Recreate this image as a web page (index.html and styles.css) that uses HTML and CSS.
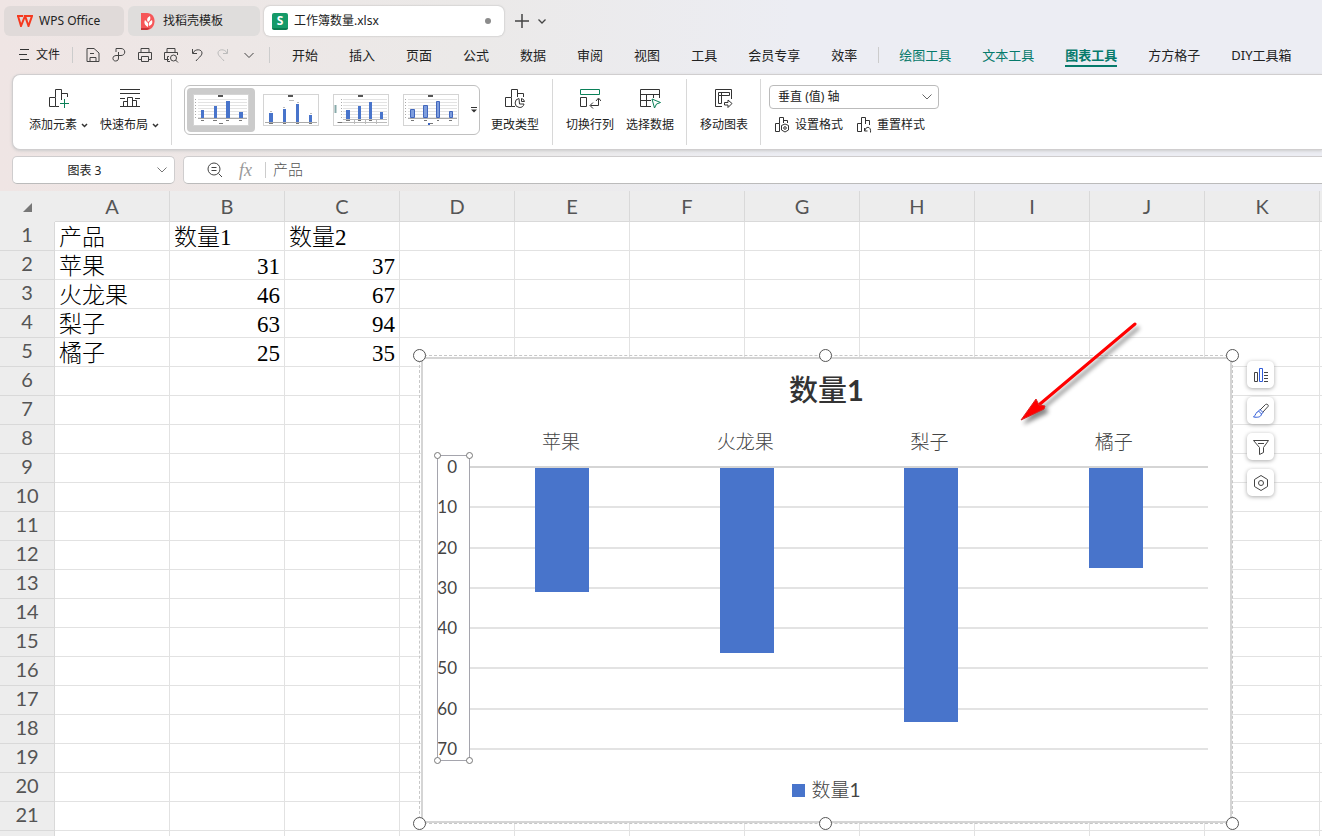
FILE: index.html
```html
<!DOCTYPE html>
<html lang="zh-CN">
<head>
    <meta charset="UTF-8">
    <meta name="viewport" content="width=device-width, initial-scale=1.0">
    <title>工作簿数量.xlsx</title>
    <link rel="stylesheet" href="styles.css">
</head>
<body>
    <!-- 文档标签 -->
    <div class="doc-tabs">
        <button class="doc-tab tab-home">
            <svg width="16" height="12" viewBox="0 0 16 12" fill="none" stroke="#f5391f" stroke-width="2"><path d="M0 1H6M1 1L4 11L8 1L11.500 11L15 1H8L10 6"/></svg>
            WPS Office
        </button>
        <button class="doc-tab tab-docer">
            <svg width="14" height="17" viewBox="0 0 14 17"><path d="M0 0H6C16 0 16 16 6 17H0Z" fill="#f65658"/><path d="M0 15H9L6 17H0Z" fill="#c93236"/><path d="M7 14C3 12 3 9 4 7L7 10ZM7 9C5 6 7 4 9 3C10 6 9 8 7 9ZM8 13C7 10 9 8 11 7C12 10 11 12 8 13Z" fill="#fff"/></svg>
            找稻壳模板
        </button>
        <button class="doc-tab tab-file">
            <span class="sheet-logo">S</span>
            工作簿数量.xlsx
            <span class="dot"></span>
        </button>
        <button class="plain new-tab" aria-label="新建">
            <svg width="14" height="14" viewBox="0 0 14 14"><path d="M7 0V14M0 7H14" stroke="#444" stroke-width="1.500"/></svg>
        </button>
        <button class="plain" aria-label="标签列表">
            <svg width="8" height="5" viewBox="0 0 8 5" fill="none" stroke="#444" stroke-width="1.300"><path d="M.5 .5L4 4L7.500 .5"/></svg>
        </button>
    </div>

    <!-- 菜单栏 -->
    <div class="menu-bar">
        <button class="plain file-menu">
            <svg width="10" height="12" viewBox="0 0 10 12" stroke="#333"><path d="M1 .5H10M0 5.500H8M1 10.500H10"/></svg>
            文件
        </button>
        <div class="quick-tools">
            <button class="plain" aria-label="保存"><svg class="icon"><path d="M2 1.500H9L14 6V14.500H2ZM5 14V10.500H11V14M5 6.500H9"/></svg></button>
            <button class="plain" aria-label="输出为PDF"><svg class="icon"><path d="M5 5V1.500H10C15 1.500 15 8.500 10 8.500H5C1 8.500 1 14 4.500 14C7 14 7.500 12.500 7.500 11V5"/></svg></button>
            <button class="plain" aria-label="打印"><svg class="icon"><path d="M4 5V1.500H12V5M4 12.500H1.500V5.500H14.500V12.500H12M4.500 9.500H11.500V14.500H4.500Z"/></svg></button>
            <button class="plain" aria-label="打印预览"><svg class="icon"><path d="M4 5V1.500H12V5M6 12.500H1.500V5.500H14.500V8M6 9.500H4.500V14.500H7"/><circle cx="10.500" cy="11" r="3"/><path d="M12.500 13L15 15.500"/></svg></button>
            <button class="plain" aria-label="撤销"><svg class="icon"><path d="M3.500 2V6.500H8M4 6C6 1.500 13 2 13 6C13 9 9 11 7 14"/></svg></button>
            <button class="plain" aria-label="恢复"><svg class="icon faded"><path d="M12.500 2V6.500H8M12 6C10 1.500 3 2 3 6C3 9 7 11 9 14"/></svg></button>
            <button class="plain" aria-label="更多"><svg class="icon"><path d="M3.500 6L8 10.500L12.500 6"/></svg></button>
        </div>
        <nav class="menu">
            <a href="#">开始</a>
            <a href="#">插入</a>
            <a href="#">页面</a>
            <a href="#">公式</a>
            <a href="#">数据</a>
            <a href="#">审阅</a>
            <a href="#">视图</a>
            <a href="#">工具</a>
            <a href="#">会员专享</a>
            <a href="#">效率</a>
        </nav>
        <nav class="menu menu-tools">
            <a href="#" class="green">绘图工具</a>
            <a href="#" class="green">文本工具</a>
            <a href="#" class="green active">图表工具</a>
            <a href="#">方方格子</a>
            <a href="#">DIY工具箱</a>
        </nav>
    </div>

    <!-- 功能区 -->
    <div class="ribbon">
        <div class="group group-add">
            <button class="big-btn">
                <svg width="22" height="22" viewBox="0 0 22 22"><path d="M1.500 18.500V9.500H7.500V18.500ZM7.500 9V1.500H13.500V12M7.500 18.500H11M13.500 5.500H19.500V9"/><path class="g" d="M16.500 11V20M12 15.500H21"/></svg>
                <span>添加元素<svg class="caret" viewBox="0 0 7 5"><path d="M1 1L3.500 3.500L6 1"/></svg></span>
            </button>
            <button class="big-btn">
                <svg width="22" height="22" viewBox="0 0 22 22"><path d="M1 1.500H21M1 5.500H21M1 10.500H6M16 10.500H21M1 18.500H21M4.500 18V13.500H8.500M8.500 18V9.500H13.500V18M13.500 12.500H17.500V18"/></svg>
                <span>快速布局<svg class="caret" viewBox="0 0 7 5"><path d="M1 1L3.500 3.500L6 1"/></svg></span>
            </button>
        </div>
        <div class="group group-style">
            <div class="gallery">
                <button class="thumb selected" aria-label="样式 1">
                    <svg width="56" height="32" viewBox="0 0 56 32"><rect x=".5" y=".5" width="55" height="31" fill="#fff" stroke="#d4d4d4"/><path d="M5 5.500H54M5 8.500H54M5 11.500H54M5 14.500H54M5 17.500H54M5 20.500H54M5 23.500H54" stroke="#e3e3e3"/><path d="M5 24.500H54" stroke="#aaa"/><path d="M25 2H30" stroke="#555" stroke-width="2"/><path d="M2.500 5V25" stroke="#aaa" stroke-dasharray="1 2"/><path d="M8 16h3v8H8zM21 12h3v12h-3zM33 7h4v17h-4zM46 18h4v6h-4z" fill="#4874cb"/><path d="M8 26.500H11M20 26.500H24M33 26.500H36M46 26.500H49M26 29.500H30" stroke="#777"/></svg>
                </button>
                <button class="thumb" aria-label="样式 2">
                    <svg width="56" height="32" viewBox="0 0 56 32"><rect x=".5" y=".5" width="55" height="31" fill="#fff" stroke="#d4d4d4"/><path d="M25 2H30" stroke="#555" stroke-width="2"/><path d="M26 6.500H31M7 17.500H9M20 13.500H22M34 8.500H36M47 19.500H49" stroke="#bbb"/><path d="M2 28.500H54" stroke="#aaa"/><path d="M6 19h4v9H6zM20 15h3v13h-3zM33 10h3v18h-3zM46 21h3v7h-3z" fill="#4874cb"/><path d="M6 29.500H10M20 29.500H23M33 29.500H36M46 29.500H49" stroke="#777"/></svg>
                </button>
                <button class="thumb" aria-label="样式 3">
                    <svg width="56" height="32" viewBox="0 0 56 32"><rect x=".5" y=".5" width="55" height="31" fill="#fff" stroke="#d4d4d4"/><path d="M10 5.500H54M10 8.500H54M10 11.500H54M10 14.500H54M10 17.500H54M10 20.500H54M10 23.500H54" stroke="#e3e3e3"/><path d="M25 2H30" stroke="#555" stroke-width="2"/><path d="M2.500 11V19" stroke="#8aa" stroke-width="2"/><path d="M8.500 5V25" stroke="#aaa" stroke-dasharray="1 2"/><path d="M13 16h4v9h-4zM25 12h3v13h-3zM36 8h3v17h-3zM47 18h3v7h-3z" fill="#4874cb"/><path d="M10 25.500H54M4 28.500H54M21.500 25V30M32.500 25V30M43.500 25V30" stroke="#bbb"/><path d="M5 28.500H9M13 26.500H17M25 26.500H28M36 26.500H39" stroke="#777"/></svg>
                </button>
                <button class="thumb" aria-label="样式 4">
                    <svg width="56" height="32" viewBox="0 0 56 32"><rect x=".5" y=".5" width="55" height="31" fill="#fff" stroke="#d4d4d4"/><path d="M5 5.500H54M5 8.500H54M5 11.500H54M5 14.500H54M5 17.500H54M5 20.500H54M5 23.500H54" stroke="#e3e3e3"/><path d="M5 24.500H54" stroke="#aaa"/><path d="M25 2H30" stroke="#555" stroke-width="2"/><path d="M2.500 5V25" stroke="#aaa" stroke-dasharray="1 2"/><path d="M7.500 15.500h4v8h-4zM20.500 11.500h4v12h-4zM33.500 7.500h3v16h-3zM46.500 17.500h3v6h-3z" fill="#7d9ddd" stroke="#4166bd"/><path d="M8 26.500H11M21 26.500H24M34 26.500H36M46 26.500H49M27 29.500H30" stroke="#777"/><path d="M25 29h2v2h-2z" fill="#3d65be"/></svg>
                </button>
                <button class="plain gallery-more" aria-label="更多样式"><svg width="6" height="6" viewBox="0 0 6 6"><path d="M0 .5H6" stroke="#333"/><path d="M0 2.500H6L3 5.500Z" fill="#333"/></svg></button>
            </div>
            <button class="big-btn">
                <svg width="22" height="22" viewBox="0 0 22 22"><path d="M1.500 18.500V9.500H7.500V18.500ZM7.500 9V1.500H13.500V9M13.500 5.500H19.500V9M7.500 18.500H11"/><path d="M15 10.500A4.500 4.500 0 1 0 20 16H15.500ZM17.500 10.500V13.500H20.500Q20 11 17.500 10.500Z"/></svg>
                <span>更改类型</span>
            </button>
        </div>
        <div class="group group-data">
            <button class="big-btn">
                <svg width="22" height="22" viewBox="0 0 22 22"><path class="g" d="M1.500 1.500H20.500V6.500H1.500Z"/><path d="M1.500 9.500H7.500V18.500H1.500ZM19.500 11V17.500H11.500M17 13L19.500 10L22 13M14 14.500L11 17.500L14 20.500"/></svg>
                <span>切换行列</span>
            </button>
            <button class="big-btn">
                <svg width="22" height="22" viewBox="0 0 22 22"><path d="M12 18.500H1.500V1.500H20.500V10M1.500 6.500H20.500M7.500 6.500V18.500M14.500 6.500V10M1.500 12.500H12"/><path class="g" d="M13 11L21.500 14.500L17.500 16L15.500 20Z"/></svg>
                <span>选择数据</span>
            </button>
        </div>
        <div class="group group-move">
            <button class="big-btn">
                <svg width="22" height="22" viewBox="0 0 22 22"><path d="M9 18.500H2.500V1.500H18.500V11M5.500 4.500H16.500V7.500H5.500ZM5.500 7.500V15.500H8.500V4.500M11.500 14.500H15V12L19 15.500L15 19.500V17H11.500Z"/></svg>
                <span>移动图表</span>
            </button>
        </div>
        <div class="group-axis">
            <div class="select-box">
                <select aria-label="图表元素">
                    <option>垂直 (值) 轴</option>
                </select>
                <svg width="10" height="6" viewBox="0 0 10 6" fill="none" stroke="#666"><path d="M.5 .5L5 5L9.500 .5"/></svg>
            </div>
            <div class="small-row">
                <button class="small-btn">
                    <svg width="17" height="17" viewBox="0 0 17 17"><path d="M1.500 15.500V7.500H5.500V15.500ZM5.500 7.500V1.500H9.500V7M9.500 4.500H13.500V7M11 8L14.500 9.500V14L11 16L7.500 14V9.500Z"/><circle cx="11" cy="12" r="1.300"/></svg>
                    设置格式
                </button>
                <button class="small-btn">
                    <svg width="17" height="17" viewBox="0 0 17 17"><path d="M1.500 15.500V7.500H5.500V15.500ZM5.500 15.500V1.500H9.500V8M9.500 4.500H13.500V9M8.500 12V15H11.500M9 14.500C9.500 10 15.500 10 14.500 16.500"/></svg>
                    重置样式
                </button>
            </div>
        </div>
    </div>

    <!-- 名称框和编辑栏 -->
    <div class="formula-row">
        <div class="name-box">
            <input type="text" value="图表 3" aria-label="名称框">
            <svg width="10" height="6" viewBox="0 0 10 6" fill="none" stroke="#777"><path d="M.5 .5L5 5L9.500 .5"/></svg>
        </div>
        <div class="formula-bar">
            <svg width="16" height="16" viewBox="0 0 16 16" fill="none" stroke="#444"><circle cx="7" cy="7" r="6"/><path d="M11.500 11.500L15 15M4.500 5.500H9.500M4.500 8.500H9.500"/></svg>
            <i class="fx">fx</i>
            <input type="text" value="产品" aria-label="编辑栏">
        </div>
    </div>

    <!-- 表格 -->
    <main class="sheet">
        <table>
            <thead>
                <tr>
                    <th class="corner"><svg width="9" height="9" viewBox="0 0 9 9"><path d="M9 0V9H0Z" fill="#777"/></svg></th>
                    <th>A</th><th>B</th><th>C</th><th>D</th><th>E</th><th>F</th><th>G</th><th>H</th><th>I</th><th>J</th><th>K</th><th></th>
                </tr>
            </thead>
            <tbody>
                <tr><th>1</th><td>产品</td><td>数量1</td><td>数量2</td><td></td><td></td><td></td><td></td><td></td><td></td><td></td><td></td><td></td></tr>
                <tr><th>2</th><td>苹果</td><td class="num">31</td><td class="num">37</td><td></td><td></td><td></td><td></td><td></td><td></td><td></td><td></td><td></td></tr>
                <tr><th>3</th><td>火龙果</td><td class="num">46</td><td class="num">67</td><td></td><td></td><td></td><td></td><td></td><td></td><td></td><td></td><td></td></tr>
                <tr><th>4</th><td>梨子</td><td class="num">63</td><td class="num">94</td><td></td><td></td><td></td><td></td><td></td><td></td><td></td><td></td><td></td></tr>
                <tr><th>5</th><td>橘子</td><td class="num">25</td><td class="num">35</td><td></td><td></td><td></td><td></td><td></td><td></td><td></td><td></td><td></td></tr>
                <tr><th>6</th><td></td><td></td><td></td><td></td><td></td><td></td><td></td><td></td><td></td><td></td><td></td><td></td></tr>
                <tr><th>7</th><td></td><td></td><td></td><td></td><td></td><td></td><td></td><td></td><td></td><td></td><td></td><td></td></tr>
                <tr><th>8</th><td></td><td></td><td></td><td></td><td></td><td></td><td></td><td></td><td></td><td></td><td></td><td></td></tr>
                <tr><th>9</th><td></td><td></td><td></td><td></td><td></td><td></td><td></td><td></td><td></td><td></td><td></td><td></td></tr>
                <tr><th>10</th><td></td><td></td><td></td><td></td><td></td><td></td><td></td><td></td><td></td><td></td><td></td><td></td></tr>
                <tr><th>11</th><td></td><td></td><td></td><td></td><td></td><td></td><td></td><td></td><td></td><td></td><td></td><td></td></tr>
                <tr><th>12</th><td></td><td></td><td></td><td></td><td></td><td></td><td></td><td></td><td></td><td></td><td></td><td></td></tr>
                <tr><th>13</th><td></td><td></td><td></td><td></td><td></td><td></td><td></td><td></td><td></td><td></td><td></td><td></td></tr>
                <tr><th>14</th><td></td><td></td><td></td><td></td><td></td><td></td><td></td><td></td><td></td><td></td><td></td><td></td></tr>
                <tr><th>15</th><td></td><td></td><td></td><td></td><td></td><td></td><td></td><td></td><td></td><td></td><td></td><td></td></tr>
                <tr><th>16</th><td></td><td></td><td></td><td></td><td></td><td></td><td></td><td></td><td></td><td></td><td></td><td></td></tr>
                <tr><th>17</th><td></td><td></td><td></td><td></td><td></td><td></td><td></td><td></td><td></td><td></td><td></td><td></td></tr>
                <tr><th>18</th><td></td><td></td><td></td><td></td><td></td><td></td><td></td><td></td><td></td><td></td><td></td><td></td></tr>
                <tr><th>19</th><td></td><td></td><td></td><td></td><td></td><td></td><td></td><td></td><td></td><td></td><td></td><td></td></tr>
                <tr><th>20</th><td></td><td></td><td></td><td></td><td></td><td></td><td></td><td></td><td></td><td></td><td></td><td></td></tr>
                <tr><th>21</th><td></td><td></td><td></td><td></td><td></td><td></td><td></td><td></td><td></td><td></td><td></td><td></td></tr>
                <tr><th></th><td></td><td></td><td></td><td></td><td></td><td></td><td></td><td></td><td></td><td></td><td></td><td></td></tr>
            </tbody>
        </table>

        <!-- 图表 -->
        <section class="chart">
            <div class="chart-area">
                <h2>数量<b>1</b></h2>
                <div class="categories">
                    <span>苹果</span>
                    <span>火龙果</span>
                    <span>梨子</span>
                    <span>橘子</span>
                </div>
                <div class="plot-row">
                    <div class="axis">
                        <span>0</span>
                        <span>10</span>
                        <span>20</span>
                        <span>30</span>
                        <span>40</span>
                        <span>50</span>
                        <span>60</span>
                        <span>70</span>
                        <div class="axis-select"><i class="tl"></i><i class="tr"></i><i class="bl"></i><i class="br"></i></div>
                    </div>
                    <div class="plot">
                        <div class="lines"><i></i><i></i><i></i><i></i><i></i><i></i><i></i><i></i></div>
                        <div class="bars">
                            <div class="bar" style="height: 44%"></div>
                            <div class="bar" style="height: 65.500%"></div>
                            <div class="bar" style="height: 90%"></div>
                            <div class="bar" style="height: 35.500%"></div>
                        </div>
                    </div>
                </div>
                <div class="legend"><i></i><span>数量<b>1</b></span></div>
            </div>
            <i class="handle tl"></i>
            <i class="handle tc"></i>
            <i class="handle tr"></i>
            <i class="handle bl"></i>
            <i class="handle bc"></i>
            <i class="handle br"></i>
            <svg class="arrow" width="124" height="108" viewBox="0 0 124 108">
                <path d="M117 5L22 85" stroke="#f00" stroke-width="3" stroke-linecap="round"/>
                <path d="M3 101L18 80L21 86L27 87L26 90Z" fill="#f00" stroke="#d22"/>
            </svg>
            <div class="chart-tools">
                <button aria-label="图表元素"><svg class="icon"><path d="M1.500 5.500H4.500V14.500H1.500ZM11 5.500H15M11 8.500H15M11 11.500H15M11 14.500H15"/><path class="b" d="M6.500 1.500H9.500V14.500H6.500Z"/></svg></button>
                <button aria-label="图表样式"><svg class="icon"><path d="M7 7L12.500 1.500C14 .5 16 2 15 3.500L9.500 9.500"/><path class="b" d="M7 6.500L10 9.500L8.500 11L5.500 8ZM5.500 8.500C3 8.500 3 12 .5 14C4 14.500 8 14.500 8.500 11"/></svg></button>
                <button aria-label="图表筛选器"><svg class="icon"><path d="M.5 1.500H15.500L10.500 8.500V13.500L6.500 15.500V8.500ZM5 4.500H11"/></svg></button>
                <button aria-label="设置"><svg class="icon"><path d="M8 .5L14.500 4.500V11.500L8 15.500L1.500 11.500V4.500Z"/><circle cx="8" cy="8" r="2.500"/></svg></button>
            </div>
        </section>
    </main>
</body>
</html>
```

FILE: styles.css
```css
* {
    box-sizing: border-box;
}
body {
    display: flex;
    flex-direction: column;
    height: 100vh;
    margin: 0;
    overflow: hidden;
    font-family: "Noto Sans", "Noto Sans CJK SC", sans-serif;
    font-size: 12px;
    line-height: 16px;
    color: #222;
    background: linear-gradient(to right, #efe5e4, #ebe9e8 35%, #ecedf3 60%, #ecedf3);
}
button, input, select {
    font: inherit;
    color: inherit;
}
button {
    padding: 0;
    border: none;
    background: none;
    white-space: nowrap;
}
a {
    color: inherit;
    text-decoration: none;
}
svg {
    flex: none;
}
.plain {
    display: flex;
    align-items: center;
    justify-content: center;
}
.icon {
    display: block;
    width: 16px;
    height: 16px;
    fill: none;
    stroke: #444;
}
.icon.faded {
    stroke: #bbb;
}
.icon .b {
    stroke: #2f5bd8;
}

/* 文档标签 */
.doc-tabs {
    display: flex;
    height: 41px;
    padding: 6px 4px 5px;
    gap: 4px;
}
.doc-tab {
    display: flex;
    align-items: center;
    padding: 0 13px;
    gap: 6px;
    border-radius: 6px;
    background: #e0dad9;
}
.tab-home {
    width: 120px;
}
.tab-docer {
    width: 132px;
    background: #dfdddc;
}
.tab-docer svg {
    margin-right: 2px;
}
.tab-file {
    width: 240px;
    padding-left: 8px;
    background: #fff;
    box-shadow: 0 0 2px #aaa;
}
.sheet-logo {
    width: 16px;
    height: 17px;
    border-bottom: 2px solid #0b7b50;
    border-radius: 2px;
    background: #159a69;
    color: #fff;
    font-weight: bold;
    line-height: 15px;
    text-align: center;
}
.dot {
    width: 6px;
    height: 6px;
    margin-left: auto;
    border-radius: 50%;
    background: #8b8b8b;
}
.new-tab {
    padding: 0 5px 0 7px;
}

/* 菜单栏 */
.menu-bar {
    display: flex;
    align-items: center;
    height: 28px;
    margin-bottom: 5px;
    font-size: 13px;
    white-space: nowrap;
}
.file-menu {
    gap: 7px;
    padding: 0 12px 0 19px;
    font-size: 12px;
}
.quick-tools {
    display: flex;
    gap: 10px;
    padding: 0 12px;
    border: 1px solid #ccc;
    border-width: 0 1px;
}
.menu {
    display: flex;
    gap: 31px;
    margin-left: 22px;
    padding-right: 21px;
}
.menu a {
    padding: 4px 0 2px;
    border-bottom: 2px solid transparent;
}
.menu-tools {
    margin-left: 0;
    padding-right: 0;
}
.menu-tools::before {
    content: "";
    width: 1px;
    height: 16px;
    margin: 4px -11px 0 0;
    background: #ccc;
}
.green {
    color: #067a6b;
}
.menu .active {
    font-weight: bold;
    border-color: #067a6b;
}

/* 功能区 */
.ribbon {
    display: flex;
    height: 76px;
    margin-left: 12px;
    padding: 4px 0;
    border: 1px solid #d0cecf;
    border-right: none;
    border-radius: 8px 0 0 8px;
    background: #fff;
    box-shadow: 0 1px 3px #ccc;
}
.group {
    display: flex;
    gap: 12px;
    padding: 0 12px 0 13px;
    border-right: 1px solid #d8d8d8;
}
.group-add {
    padding-left: 16px;
}
.group-style {
    gap: 11px;
    padding: 0 13px 0 12px;
}
.big-btn {
    display: flex;
    flex-direction: column;
    align-items: center;
    gap: 7px;
    padding-top: 9px;
}
.big-btn svg, .small-btn svg {
    fill: none;
    stroke: #333;
}
.big-btn .g {
    stroke: #0a8058;
}
.big-btn .caret {
    width: 7px;
    height: 5px;
    margin: 0 0 1px 4px;
    stroke-width: 1.500;
}
.gallery {
    display: flex;
    align-items: center;
    height: 50px;
    margin-top: 6px;
    padding-left: 2px;
    border: 1px solid #c0c0c0;
    border-radius: 6px;
}
.thumb {
    display: flex;
    padding: 6px;
    border-radius: 4px;
    margin-right: 2px;
}
.thumb.selected {
    background: #cbcbcb;
}
.gallery-more {
    padding: 0 2px 0 4px;
}
.group-axis {
    padding: 6px 8px;
}
.select-box {
    position: relative;
    width: 170px;
}
.select-box select {
    appearance: none;
    width: 100%;
    height: 24px;
    padding: 0 8px;
    border: 1px solid #bbb;
    border-radius: 4px;
    background: #fff;
}
.select-box svg, .name-box svg {
    position: absolute;
    right: 7px;
    top: 50%;
    margin-top: -3px;
    pointer-events: none;
}
.small-row {
    display: flex;
    gap: 13px;
    padding: 7px 5px;
}
.small-btn {
    display: flex;
    align-items: center;
    gap: 4px;
}

/* 名称框和编辑栏 */
.formula-row {
    display: flex;
    gap: 8px;
    height: 28px;
    margin: 6px 0 7px 12px;
}
.name-box, .formula-bar {
    border: 1px solid #cfcdce;
    border-bottom-color: #bbb;
    border-radius: 5px;
    background: #fff;
}
.name-box {
    position: relative;
    width: 163px;
}
.name-box input {
    width: 100%;
    height: 100%;
    padding: 0 18px 0 0;
    border: none;
    background: none;
    text-align: center;
}
.formula-bar {
    display: flex;
    flex: 1;
    align-items: center;
    padding-left: 23px;
    border-right: none;
    border-radius: 5px 0 0 5px;
}
.fx {
    margin: 0 13px 0 16px;
    font-family: "Liberation Serif", serif;
    font-size: 18px;
    color: #999;
}
.formula-bar input {
    flex: 1;
    height: 16px;
    padding: 0 7px 2px;
    border: none;
    border-left: 1px solid #ccc;
    font-size: 15px;
    font-weight: 300;
    color: #555;
}

/* 表格 */
.sheet {
    position: relative;
    flex: 1;
    min-height: 0;
    overflow: hidden;
    background: #fff;
}
table {
    width: 1435px;
    table-layout: fixed;
    border-spacing: 0;
}
th, td {
    height: 29px;
    border: 1px solid #e2e2e2;
    border-width: 0 1px 1px 0;
}
th {
    padding: 0 0 3px;
    background: #ededed;
    border-color: #d9d9d9;
    font-family: Lato, sans-serif;
    font-size: 20px;
    font-weight: normal;
    line-height: 25px;
    color: #555;
}
td {
    padding: 3px 4px 0;
    font-family: "Liberation Serif", "Noto Sans CJK SC", serif;
    font-size: 23px;
    font-weight: 300;
    line-height: 25px;
    color: #000;
    white-space: nowrap;
}
thead th {
    height: 31px;
    padding: 0;
}
.corner {
    width: 55px;
    border-color: #ededed;
}
.corner svg {
    display: block;
    margin: 3px auto 0;
}
.num {
    text-align: right;
}

/* 图表 */
.chart {
    position: absolute;
    top: 164px;
    left: 419px;
    width: 814px;
    padding: 1px 0 0 1px;
    border: 1px dashed #c8c8c8;
    font-family: Lato, "Noto Sans CJK SC", sans-serif;
    font-size: 19px;
    font-weight: 300;
    color: #444;
}
.chart-area {
    border: 2px solid #d5d5d5;
    background: #fff;
}
.chart h2 {
    margin: 0;
    font-size: 29px;
    font-weight: 500;
    line-height: 62px;
    text-align: center;
    color: #333;
}
.categories {
    display: grid;
    grid-template-columns: repeat(4, 1fr);
    height: 45px;
    padding: 0 24px 0 46px;
    line-height: 42px;
    text-align: center;
}
.plot-row {
    display: grid;
    grid-template-columns: 33px 1fr;
    height: 284px;
    padding: 0 22px 0 14px;
}
.axis {
    position: relative;
    display: flex;
    flex-direction: column;
    justify-content: space-between;
    padding-right: 13px;
    font-size: 17px;
    font-weight: normal;
    text-align: right;
}
.axis span {
    height: 2px;
    line-height: 2px;
}
.axis-select {
    position: absolute;
    inset: -11px 0;
    border: 1px solid #a5a5ad;
}
.axis-select i, .handle {
    position: absolute;
    width: 7px;
    height: 7px;
    margin: -4px;
    border: 1px solid #777;
    border-radius: 50%;
    background: #fff;
}
.handle {
    width: 13px;
    height: 13px;
    margin: -7px;
    border-color: #555;
}
.tl, .tc, .tr {
    top: 0;
}
.bl, .bc, .br {
    bottom: 0;
}
.tl, .bl {
    left: 0;
}
.tc, .bc {
    left: 50%;
}
.tr, .br {
    right: 0;
}
.plot {
    display: grid;
}
.lines, .bars {
    grid-area: 1 / 1;
}
.lines {
    display: flex;
    flex-direction: column;
    justify-content: space-between;
}
.lines i {
    height: 2px;
    background: #e3e3e3;
}
.lines i:first-child {
    background: #d5d5d5;
}
.bars {
    display: grid;
    grid-template-columns: repeat(4, 1fr);
    justify-items: center;
    padding-top: 2px;
}
.bar {
    width: 54px;
    background: #4874cb;
}
.legend {
    display: flex;
    align-items: center;
    justify-content: center;
    gap: 6px;
    height: 71px;
    padding-top: 9px;
}
.legend i {
    width: 13px;
    height: 13px;
    background: #4874cb;
}
.legend b {
    font-weight: normal;
}
.arrow {
    position: absolute;
    left: 598px;
    top: -37px;
    fill: none;
    filter: drop-shadow(3px 4px 2px #888);
}
.chart-tools {
    position: absolute;
    left: 827px;
    top: 5px;
    display: flex;
    flex-direction: column;
    gap: 9px;
}
.chart-tools button {
    display: flex;
    align-items: center;
    justify-content: center;
    width: 27px;
    height: 27px;
    border-radius: 5px;
    background: #fff;
    box-shadow: 0 1px 4px #aaa;
}
```
